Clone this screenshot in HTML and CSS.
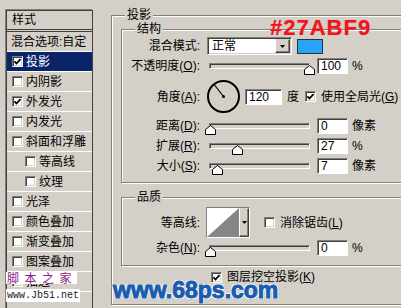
FILE: index.html
```html
<!DOCTYPE html>
<html>
<head>
<meta charset="utf-8">
<link rel="stylesheet" href="styles.css">
</head>
<body>
<div class="dialog">
  <div class="list">
    <div class="list-head">样式</div>
    <div class="row plain">混合选项:自定</div>
    <div class="row sel"><span class="cb"><svg viewBox="0 0 9 9" width="9" height="9"><polyline points="1.5,4.3 3.5,6.5 7.5,2.2" fill="none" stroke="#000" stroke-width="1.8"/></svg></span>投影</div>
    <div class="row"><span class="cb"></span>内阴影</div>
    <div class="row"><span class="cb"><svg viewBox="0 0 9 9" width="9" height="9"><polyline points="1.5,4.3 3.5,6.5 7.5,2.2" fill="none" stroke="#000" stroke-width="1.8"/></svg></span>外发光</div>
    <div class="row"><span class="cb"></span>内发光</div>
    <div class="row"><span class="cb"></span>斜面和浮雕</div>
    <div class="row sub"><span class="cb"></span>等高线</div>
    <div class="row sub"><span class="cb"></span>纹理</div>
    <div class="row"><span class="cb"></span>光泽</div>
    <div class="row"><span class="cb"></span>颜色叠加</div>
    <div class="row"><span class="cb"></span>渐变叠加</div>
    <div class="row"><span class="cb"></span>图案叠加</div>
    <div class="row"><span class="cb"></span>描边</div>
  </div>

  <div class="panel">
    <div class="group outer">
      <span class="legend">投影</span>

      <div class="group struct">
        <span class="legend">结构</span>
        <div class="frow h18">
          <span class="lbl">混合模式:</span>
          <div class="select"><span class="sel-text">正常</span><span class="dd"><svg viewBox="0 0 5 3" width="5" height="3"><polygon points="0,0 5,0 2.5,3" fill="#000"/></svg></span></div>
          <div class="swatch"></div>
        </div>
        <div class="frow h22">
          <span class="lbl">不透明度(<u>O</u>):</span>
          <div class="slider"><div class="track"></div><svg class="thumb" style="left:95px" viewBox="0 0 11 10" width="11" height="10"><polygon points="0.5,4.5 5.5,0.5 10.5,4.5 10.5,9.5 0.5,9.5" fill="#fff" stroke="#000"/></svg></div>
          <div class="inp">100</div>
          <span class="unit">%</span>
        </div>
        <div class="frow h39">
          <span class="lbl">角度(<u>A</u>):</span>
          <svg class="dial" viewBox="0 0 35 35" width="35" height="35"><circle cx="17.5" cy="17.5" r="15.5" fill="none" stroke="#000" stroke-width="2"/><line x1="17.5" y1="17.5" x2="8.5" y2="6" stroke="#000" stroke-width="1.2"/><circle cx="17.5" cy="17.5" r="1.5" fill="#000"/></svg>
          <div class="inp wide">120</div>
          <span class="deg">度</span>
          <span class="cb gap6"><svg viewBox="0 0 9 9" width="9" height="9"><polyline points="1.5,4.3 3.5,6.5 7.5,2.2" fill="none" stroke="#000" stroke-width="1.8"/></svg></span>
          <span class="cbtext">使用全局光(<u>G</u>)</span>
        </div>
        <div class="frow h20">
          <span class="lbl">距离(<u>D</u>):</span>
          <div class="slider"><div class="track"></div><svg class="thumb" style="left:-4px" viewBox="0 0 11 10" width="11" height="10"><polygon points="0.5,4.5 5.5,0.5 10.5,4.5 10.5,9.5 0.5,9.5" fill="#fff" stroke="#000"/></svg></div>
          <div class="inp">0</div>
          <span class="unit">像素</span>
        </div>
        <div class="frow h20">
          <span class="lbl">扩展(<u>R</u>):</span>
          <div class="slider"><div class="track"></div><svg class="thumb" style="left:23px" viewBox="0 0 11 10" width="11" height="10"><polygon points="0.5,4.5 5.5,0.5 10.5,4.5 10.5,9.5 0.5,9.5" fill="#fff" stroke="#000"/></svg></div>
          <div class="inp">27</div>
          <span class="unit">%</span>
        </div>
        <div class="frow h20">
          <span class="lbl">大小(<u>S</u>):</span>
          <div class="slider"><div class="track"></div><svg class="thumb" style="left:3px" viewBox="0 0 11 10" width="11" height="10"><polygon points="0.5,4.5 5.5,0.5 10.5,4.5 10.5,9.5 0.5,9.5" fill="#fff" stroke="#000"/></svg></div>
          <div class="inp">7</div>
          <span class="unit">像素</span>
        </div>
      </div>

      <div class="group quality">
        <span class="legend">品质</span>
        <div class="frow h31">
          <span class="lbl">等高线:</span>
          <div class="contour">
            <svg class="curve" viewBox="0 0 32 29" width="32" height="29"><rect width="32" height="29" fill="#fff"/><polygon points="0,29 32,0 32,29" fill="#868686"/></svg>
            <span class="cdd"><svg viewBox="0 0 5 3" width="5" height="3"><polygon points="0,0 5,0 2.5,3" fill="#000"/></svg></span>
          </div>
          <span class="cb gap14"></span>
          <span class="cbtext">消除锯齿(<u>L</u>)</span>
        </div>
        <div class="frow h20">
          <span class="lbl">杂色(<u>N</u>):</span>
          <div class="slider"><div class="track"></div><svg class="thumb" style="left:-4px" viewBox="0 0 11 10" width="11" height="10"><polygon points="0.5,4.5 5.5,0.5 10.5,4.5 10.5,9.5 0.5,9.5" fill="#fff" stroke="#000"/></svg></div>
          <div class="inp">0</div>
          <span class="unit">%</span>
        </div>
      </div>

      <div class="frow h20 knock">
        <span class="cb"><svg viewBox="0 0 9 9" width="9" height="9"><polyline points="1.5,4.3 3.5,6.5 7.5,2.2" fill="none" stroke="#000" stroke-width="1.8"/></svg></span>
        <span class="cbtext">图层挖空投影(<u>K</u>)</span>
      </div>
    </div>
  </div>
</div>

<div class="hex">#27ABF9</div>
<div class="wm-jb"><span class="jb-cn">脚本之家</span><span class="jb-url">www.Jb51.net</span></div>
<div class="wm-68">www.68ps.com</div>
</body>
</html>
```
FILE: styles.css
```css
* { box-sizing: border-box; }
html, body { margin: 0; }
body {
  width: 401px;
  height: 308px;
  overflow: hidden;
  position: relative;
  background: #d4d0c8;
  color: #000;
  font: 12px/14px "Liberation Sans", "Noto Sans CJK SC", sans-serif;
}
u { text-decoration: underline; text-underline-offset: 1px; }

.dialog { display: flex; align-items: flex-start; }

/* left style list */
.list {
  flex: none;
  width: 87px;
  height: 310px;
  margin: 10px 0 0 6px;
  border: 1px solid #404040;
  box-shadow: -1px -1px 0 #808080;
}
.list-head {
  height: 21px;
  line-height: 18px;
  padding-left: 5px;
  border-bottom: 3px double #404040;
}
.row {
  height: 20px;
  display: flex;
  align-items: center;
  padding-left: 5px;
  border-bottom: 1px solid #fff;
  white-space: nowrap;
}
.row.plain { padding-left: 4px; }
.row.sub { padding-left: 18px; }
.row.sel { background: #0a246a; color: #fff; }
.row .cb { margin-right: 3px; }

/* checkbox */
.cb {
  flex: none;
  width: 11px;
  height: 11px;
  background: #fff;
  border: 1px solid;
  border-color: #808080 #fff #fff #808080;
  box-shadow: inset 1px 1px 0 #404040, inset -1px -1px 0 #d4d0c8;
  display: inline-block;
}
.cb svg { display: block; margin: 0; }
.gap6 { margin-left: 6px; }
.gap14 { margin-left: 14px; }
.cbtext { margin-left: 5px; white-space: nowrap; }

/* right panel */
.panel { flex: none; margin: 15px 0 0 18px; }
.group {
  position: relative;
  border: 1px solid #808080;
  box-shadow: inset 1px 1px 0 #fff, 1px 1px 0 #fff;
}
.legend {
  position: absolute;
  top: -8px;
  left: 13px;
  padding: 0 2px;
  background: #d4d0c8;
  line-height: 14px;
}
.outer {
  width: 330px;
  height: 290px;
  padding: 13px 0 0 9px;
}
.struct {
  width: 300px;
  height: 154px;
  padding-top: 7px;
}
.quality {
  width: 300px;
  height: 69px;
  margin-top: 14px;
  padding-top: 9px;
}

.frow { display: flex; align-items: center; white-space: nowrap; }
.h18 { height: 18px; }
.h20 { height: 20px; }
.h22 { height: 22px; }
.h31 { height: 31px; }
.h39 { height: 39px; }
.lbl { flex: none; width: 78px; text-align: right; }

/* select */
.select {
  flex: none;
  margin-left: 7px;
  width: 85px;
  height: 18px;
  display: flex;
  align-items: center;
  background: #fff;
  border: 1px solid;
  border-color: #808080 #fff #fff #808080;
  box-shadow: inset 1px 1px 0 #404040, inset -1px -1px 0 #d4d0c8;
  padding: 1px 1px 1px 4px;
}
.sel-text { flex: 1; }
.dd, .cdd {
  flex: none;
  width: 15px;
  height: 14px;
  background: #d4d0c8;
  border: 1px solid;
  border-color: #d4d0c8 #404040 #404040 #fff;
  box-shadow: inset -1px -1px 0 #808080;
  display: flex;
  align-items: center;
  justify-content: center;
}
.swatch {
  flex: none;
  margin-left: 5px;
  width: 26px;
  height: 15px;
  background: #27a4f6;
  border: 1px solid #303030;
}

/* slider */
.slider {
  flex: none;
  position: relative;
  width: 101px;
  height: 20px;
  margin-left: 9px;
  padding-top: 7px;
}
.track {
  height: 6px;
  background: #d4d0c8;
  border: 1px solid;
  border-color: #808080 #fff #fff #808080;
  box-shadow: inset 1px 1px 0 #404040;
}
.thumb { position: absolute; top: 9px; display: block; }

/* inputs */
.inp {
  flex: none;
  margin-left: 7px;
  width: 31px;
  height: 16px;
  line-height: 13px;
  padding: 1px 0 0 3px;
  background: #fff;
  border: 1px solid;
  border-color: #808080 #fff #fff #808080;
  box-shadow: inset 1px 1px 0 #404040;
}
.inp.wide { width: 37px; margin-left: 4px; }
.unit { margin-left: 4px; }
.deg { margin-left: 5px; }
.dial { flex: none; display: block; margin-left: 6px; }

/* contour */
.contour {
  flex: none;
  margin-left: 6px;
  height: 31px;
  display: flex;
  border: 1px solid;
  border-color: #808080 #fff #fff #808080;
}
.curve { display: block; }
.contour .cdd { width: 10px; height: 29px; }

.knock { margin: 1px 0 0 90px; }

/* overlays */
.hex {
  position: absolute;
  left: 270px;
  top: 17px;
  font: bold 22px/22px "Liberation Sans", sans-serif;
  letter-spacing: 1px;
  color: #ee1520;
  text-shadow: 0 0 1px rgba(255, 60, 60, 0.6);
}
.wm-jb {
  position: absolute;
  left: 6px;
  top: 272px;
  display: flex;
  flex-direction: column;
  align-items: flex-start;
  gap: 5px;
}
.jb-cn {
  background: #fff;
  color: #8a1a8a;
  font: 12px/12px "Noto Sans CJK SC", sans-serif;
  letter-spacing: 5.5px;
  padding-left: 1px;
  white-space: nowrap;
}
.jb-url {
  background: #fff;
  color: #222;
  font: 10px/13px "Liberation Mono", monospace;
  padding: 0 1px;
}
.wm-68 {
  position: absolute;
  left: 113px;
  top: 279px;
  font: bold 23px/23px "Liberation Sans", sans-serif;
  color: #1c5cae;
  -webkit-text-stroke: 1px #1c5cae;
  text-shadow: 1px 1px 0 #fff, -1px -1px 0 #fff, 1px -1px 0 #fff, -1px 1px 0 #fff, 0 0 3px #a6c8ee;
}
```
